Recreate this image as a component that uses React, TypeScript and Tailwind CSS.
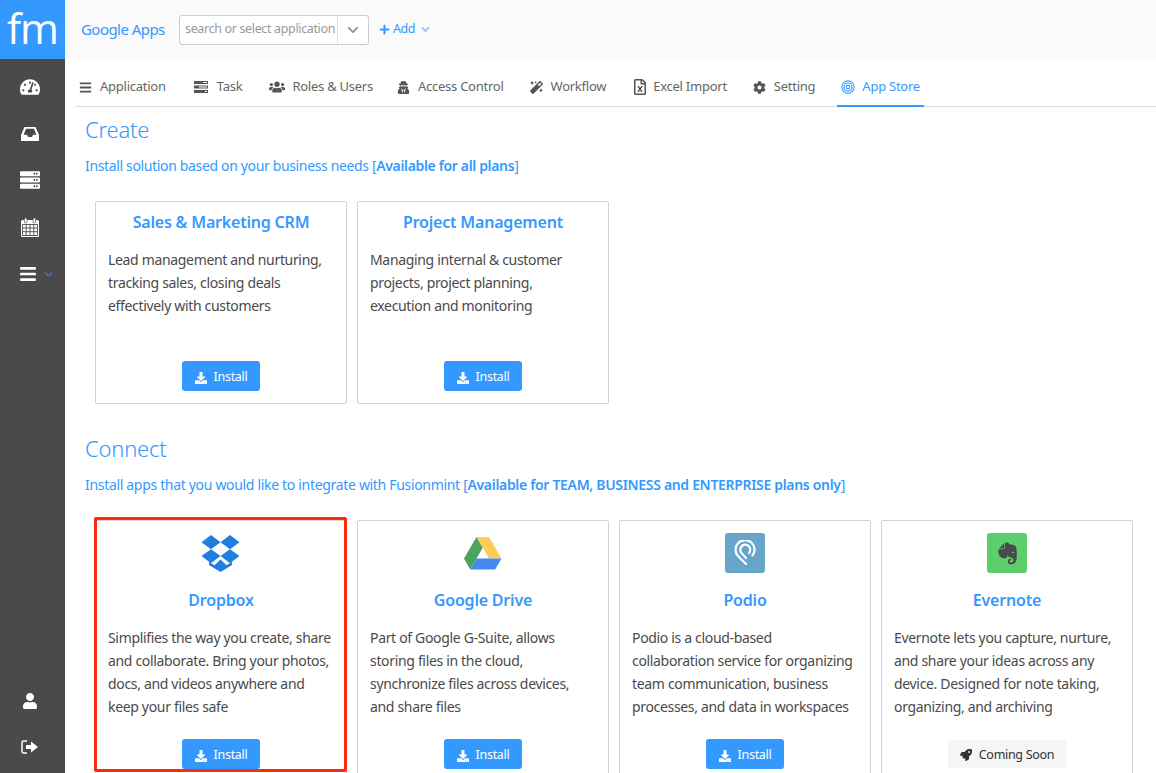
import React from "react";
import {
  FaTachometerAlt, FaServer, FaBars, FaUser, FaChevronDown,
  FaPlus, FaAngleDown, FaUsers, FaUserSecret, FaMagic, FaRegFileExcel, FaCog, FaDownload,
  FaRocket, FaEvernote,
} from "react-icons/fa";

const Rings = () => (
  <svg width="14" height="14" viewBox="0 0 14 14" fill="none" stroke="#3399ff" strokeWidth="1.1">
    <circle cx="7" cy="7" r="6.2" />
    <circle cx="7" cy="7" r="4" />
    <circle cx="7" cy="7" r="1.8" />
  </svg>
);

const TasksIcon = () => (
  <svg width="14" height="12" viewBox="0 0 14 12">
    <rect x="0" y="0" width="14" height="3" fill="#555" />
    <rect x="9" y="1" width="4" height="1" fill="#fff" />
    <rect x="0" y="4.5" width="14" height="3" fill="#555" />
    <rect x="5" y="5.5" width="8" height="1" fill="#fff" />
    <rect x="0" y="9" width="14" height="3" fill="#555" />
    <rect x="11" y="10" width="2" height="1" fill="#fff" />
  </svg>
);

const InboxIcon = () => (
  <svg width="18" height="14" viewBox="0 0 18 14">
    <path d="M3.5 0H14.5L18 8V14H0V8Z" fill="#fff" />
    <path d="M5 1.7H13L15.4 7.8H12L11 10H7L6 7.8H2.6Z" fill="#4a4a4a" />
  </svg>
);

const CalendarIcon = () => (
  <svg width="18" height="19" viewBox="0 0 18 19">
    <rect x="0" y="2" width="18" height="17" rx="1.5" fill="#fff" />
    <g stroke="#4a4a4a" strokeWidth="0.9">
      <path d="M1.5 6.5H16.5V17.5H1.5Z" fill="none" />
      <path d="M1.5 10H16.5M1.5 13.7H16.5M5.2 6.5V17.5M9 6.5V17.5M12.8 6.5V17.5" />
    </g>
    <rect x="3.4" y="0" width="2.6" height="5" rx="1.2" fill="#fff" stroke="#4a4a4a" strokeWidth="0.7" />
    <rect x="12" y="0" width="2.6" height="5" rx="1.2" fill="#fff" stroke="#4a4a4a" strokeWidth="0.7" />
  </svg>
);

const SignOutIcon = () => (
  <svg width="17" height="14" viewBox="0 0 17 14">
    <path d="M6 1H3Q1 1 1 3V11Q1 13 3 13H6" fill="none" stroke="#fff" strokeWidth="1.5" />
    <path d="M5 5H10V1.5L17 7L10 12.5V9H5Z" fill="#fff" />
  </svg>
);

const DropboxLogo = () => (
  <svg width="40" height="40" viewBox="0 0 40 40" fill="#1f7fe0">
    <path d="M10 2L19.5 9.3L10 16.3L0.5 9.3Z" />
    <path d="M29 2L38.5 9.3L29 16.3L19.5 9.3Z" />
    <path d="M10 16.3L19.5 23L10 30.3L0.5 23Z" />
    <path d="M29 16.3L38.5 23L29 30.3L19.5 23Z" />
    <path d="M8 29L13.5 32.3L19.5 26.5L25.5 32.3L31 29V32L19.5 39L8 32Z" />
  </svg>
);

const Drive = () => (
  <svg width="38" height="33" viewBox="0 0 38 33" strokeLinejoin="round">
    <polygon points="12.5,0 25,0 37.5,21.5 25,21.5" fill="#fdcd55" />
    <polygon points="12.5,0 18.7,10.8 6.2,32.5 0,21.5" fill="#4aa35f" />
    <polygon points="6.2,32.5 12.5,21.5 37.5,21.5 31.2,32.5" fill="#4789f0" />
  </svg>
);

const Podio = () => (
  <div className="w-10 h-10 rounded-[3px] bg-[#67a5cb] flex items-center justify-center">
    <svg width="24" height="26" viewBox="0 0 24 26" fill="none" stroke="#fff" strokeWidth="2.2" strokeLinecap="round">
      <path d="M13 24 L5 16 A9.5 9.5 0 1 1 19.5 15.5" />
      <path d="M13 18 L9 13.5 A5 5 0 1 1 16 13" />
    </svg>
  </div>
);

const Evernote = () => (
  <div className="w-10 h-10 rounded-[3px] bg-[#5ccf6b] flex items-center justify-center text-[#4a4a4a]">
    <FaEvernote size={25} />
  </div>
);

type CardProps = { title: string; lines: string[]; icon?: React.ReactNode; soon?: boolean; highlight?: boolean; tall?: boolean };

const Card = ({ title, lines, icon, soon, highlight, tall }: CardProps) => (
  <div className={`relative w-[252px] border border-[#d2d2d2] rounded-[2px] px-3 flex flex-col ${tall ? "h-[270px] pt-[12px]" : "h-[203px] pt-[8px]"}`}>
    {highlight && <div className="absolute left-[-2px] top-[-4px] w-[253px] h-[255px] border-[3px] border-[#fa2a0f] rounded-[2px]" />}
    {icon && <div className="h-[40px] flex items-center justify-center">{icon}</div>}
    <h3 className={`text-center text-[16px] font-semibold leading-[24px] text-[#3399ff] tracking-[-0.2px] ${icon ? "mt-[15px]" : ""}`}>{title}</h3>
    <div className="text-[14px] leading-[23px] text-[#4a4a4a] tracking-[-0.33px] whitespace-nowrap h-[92px] mt-[14px]">
      {lines.map((l) => <p key={l}>{l}</p>)}
    </div>
    <div className="flex justify-center mt-[21px]">
      {soon ? (
        <button className="h-[28px] mt-[1px] px-[12px] pt-[2px] rounded-[3px] bg-[#f5f5f5] text-[#333] text-[12.5px] tracking-[-0.3px] flex items-center gap-[7px]">
          <FaRocket size={12} />Coming Soon
        </button>
      ) : (
        <button className="w-[78px] h-[30px] pt-[3px] rounded-[3px] bg-[#3399ff] text-white text-[12.5px] tracking-[-0.3px] flex items-center justify-center gap-[7px]">
          <FaDownload size={12} />Install
        </button>
      )}
    </div>
  </div>
);

const tabs: { label: string; icon: React.ReactNode; active?: boolean; tab: string; box: string }[] = [
  { label: "Application", icon: <FaBars size={13} />, tab: "mr-[20px]", box: "w-[16px]" },
  { label: "Task", icon: <TasksIcon />, tab: "mr-[19px]", box: "w-[18px]" },
  { label: "Roles & Users", icon: <FaUsers size={16} />, tab: "mr-[16px]", box: "w-[18px]" },
  { label: "Access Control", icon: <FaUserSecret size={13} />, tab: "mr-[18px]", box: "w-[16px]" },
  { label: "Workflow", icon: <FaMagic size={13} />, tab: "mr-[18px]", box: "w-[16px]" },
  { label: "Excel Import", icon: <FaRegFileExcel size={16} />, tab: "mr-[18px]", box: "w-[16px]" },
  { label: "Setting", icon: <FaCog size={13} />, tab: "mr-[18px]", box: "w-[16px]" },
  { label: "App Store", icon: <Rings />, active: true, tab: "mr-[18px]", box: "w-[16px]" },
];

export default function App() {
  return (
    <div className="flex h-[773px] w-[1156px] overflow-hidden bg-white" style={{ fontFamily: '"Noto Sans", sans-serif' }}>
      <aside className="w-[65px] shrink-0 bg-[#4a4a4a] flex flex-col text-white">
        <div className="h-[59px] bg-[#3399ff] flex items-center justify-center text-[42px] leading-none pb-[3px] tracking-[-1px] font-medium" style={{ fontFamily: '"Open Sans", sans-serif' }}>fm</div>
        <div className="flex flex-col items-center pr-[6px]">
          <div className="h-[48px] mt-[4px] flex items-center justify-center"><FaTachometerAlt size={20} /></div>
          <div className="h-[46px] flex items-center justify-center"><InboxIcon /></div>
          <div className="h-[46px] flex items-center justify-center"><FaServer size={20} /></div>
          <div className="h-[48px] flex items-center justify-center"><CalendarIcon /></div>
          <div className="h-[46px] flex items-center pl-[12px] gap-[7px]"><FaBars size={18} /><FaChevronDown size={9} className="text-[#3a7bbd]" /></div>
        </div>
        <div className="mt-auto flex flex-col items-center pr-[6px] pb-[3px]">
          <div className="h-[46px] flex items-center justify-center"><FaUser size={16} /></div>
          <div className="h-[46px] flex items-center justify-center"><SignOutIcon /></div>
        </div>
      </aside>
      <main className="flex-1 min-w-0">
        <header className="h-[59px] bg-[#fafafa] flex items-center pl-[16px]">
          <span className="text-[15px] text-[#3399ff] tracking-[-0.55px] w-[98px] whitespace-nowrap">Google Apps</span>
          <div className="w-[190px] h-[30px] border border-[#cccccc] rounded-[3px] bg-white flex items-center">
            <span className="flex-1 pl-[5px] text-[12.5px] text-[#999] tracking-[-0.35px] whitespace-nowrap overflow-hidden">search or select application</span>
            <span className="w-[31px] h-full border-l border-[#dddddd] flex items-center justify-center text-[#999]"><FaChevronDown size={12} /></span>
          </div>
          <span className="ml-[10px] flex items-center text-[12.5px] text-[#3399ff] tracking-[-0.5px]">
            <FaPlus size={11} className="mr-[3px]" />Add<FaAngleDown size={13} className="ml-[4px] text-[#9cc9f5]" />
          </span>
        </header>
        <nav className="h-[48px] ml-[10px] border-b border-[#dddddd] flex items-stretch">
          {tabs.map((t) => (
            <div key={t.label} className={`flex items-center gap-[5px] px-[4px] pt-[9px] text-[13px] tracking-[-0.25px] whitespace-nowrap ${t.tab} ${t.active ? "text-[#3399ff] border-b-2 border-[#3399ff] mb-[-1px]" : "text-[#666]"}`}>
              <span className={`flex justify-start ${t.box} ${t.active ? "" : "text-[#555]"}`}>{t.icon}</span>
              {t.label}
            </div>
          ))}
        </nav>
        <section className="pl-[20px]">
          <h2 className="text-[22px] font-light text-[#3399ff] leading-[30px] mt-[7px] tracking-[-0.2px]">Create</h2>
          <p className="text-[14px] text-[#3399ff] leading-[20px] mt-[12px] tracking-[-0.35px]">
            Install solution based on your business needs [<b className="font-semibold">Available for all plans</b>]
          </p>
          <div className="flex gap-[10px] ml-[10px] mt-[25px]">
            <Card title="Sales & Marketing CRM" lines={["Lead management and nurturing,", "tracking sales, closing deals", "effectively with customers"]} />
            <Card title="Project Management" lines={["Managing internal & customer", "projects, project planning,", "execution and monitoring"]} />
          </div>
          <h2 className="text-[22px] font-light text-[#3399ff] leading-[30px] mt-[29px] tracking-[-0.2px]">Connect</h2>
          <p className="text-[14px] text-[#3399ff] leading-[20px] mt-[12px] tracking-[-0.32px]">
            Install apps that you would like to integrate with Fusionmint [<b className="font-semibold">Available for TEAM, BUSINESS and ENTERPRISE plans only</b>]
          </p>
          <div className="flex gap-[10px] ml-[10px] mt-[25px]">
            <Card tall highlight title="Dropbox" icon={<DropboxLogo />} lines={["Simplifies the way you create, share", "and collaborate. Bring your photos,", "docs, and videos anywhere and", "keep your files safe"]} />
            <Card tall title="Google Drive" icon={<Drive />} lines={["Part of Google G-Suite, allows", "storing files in the cloud,", "synchronize files across devices,", "and share files"]} />
            <Card tall title="Podio" icon={<Podio />} lines={["Podio is a cloud-based", "collaboration service for organizing", "team communication, business", "processes, and data in workspaces"]} />
            <Card tall soon title="Evernote" icon={<Evernote />} lines={["Evernote lets you capture, nurture,", "and share your ideas across any", "device. Designed for note taking,", "organizing, and archiving"]} />
          </div>
        </section>
      </main>
    </div>
  );
}
